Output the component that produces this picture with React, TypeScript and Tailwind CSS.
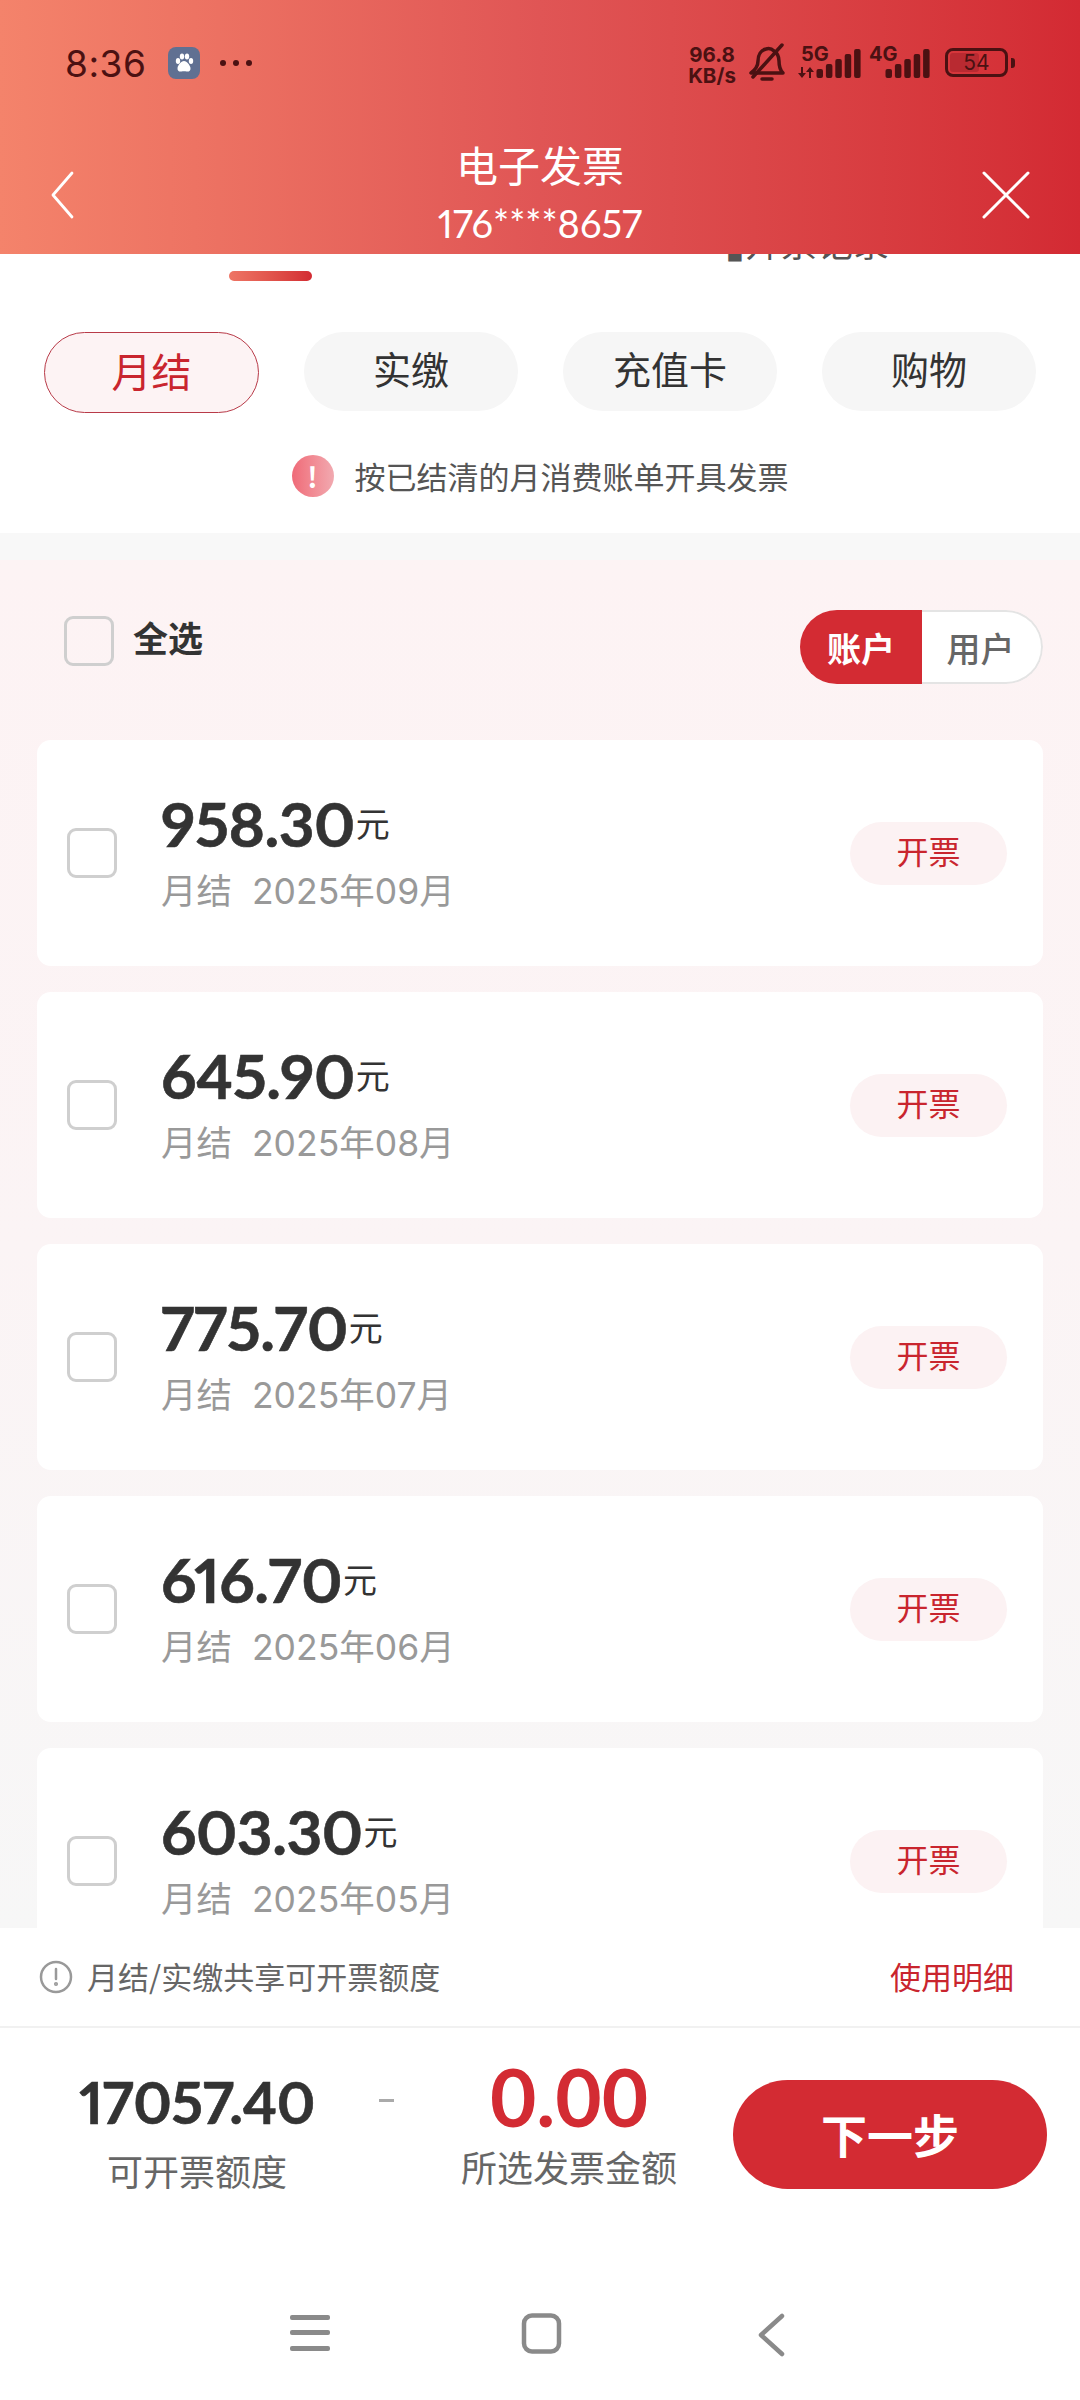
const cjk = "font-['Noto_Sans_CJK_SC','Noto_Sans',sans-serif]";
const bills = [
  { amount: "958.30", month: "2025年09月" },
  { amount: "645.90", month: "2025年08月" },
  { amount: "775.70", month: "2025年07月" },
  { amount: "616.70", month: "2025年06月" },
  { amount: "603.30", month: "2025年05月" },
];
const tabs = ["实缴", "充值卡", "购物"];

function Signal() {
  const hs = [9, 14, 19, 24, 29];
  return (
    <svg width="46" height="29" viewBox="0 0 46 29" className="block">
      {hs.map((h, i) => (
        <rect key={i} x={0.5 + i * 9.4} y={29 - h} width="6.500" height={h} rx="2" fill="#4b1112" />
      ))}
    </svg>
  );
}

function Check({ className }: { className: string }) {
  return <div className={`w-[50px] h-[50px] rounded-[9px] border-[3px] border-[#cfcfcf] shrink-0 ${className}`} />;
}

function StatusBar() {
  return (
    <div className="h-[128px] pt-[38px] pl-[65px] pr-[65px] flex items-start justify-between text-[#4b1112]">
      <div className="flex items-center h-[50px] gap-[23px]">
        <span className="font-['Inter',sans-serif] text-[37px] leading-none tracking-[0.5px] w-[80px]">8:36</span>
        <div className="w-[32px] h-[32px] rounded-[8px] bg-[#607092] flex items-center justify-center">
          <svg width="22" height="22" viewBox="0 0 22 22" fill="#fff">
            <ellipse cx="5" cy="9" rx="2.2" ry="3" />
            <ellipse cx="9" cy="4.5" rx="2.2" ry="3" />
            <ellipse cx="14" cy="4.5" rx="2.2" ry="3" />
            <ellipse cx="18" cy="9" rx="2.2" ry="3" />
            <path d="M11 9c-3 0-6 4-6.500 7-.3 3 2 4 4 3.500 1.500-.3 3.500-.3 5 0 2 .5 4.300-.5 4-3.500C17 13 14 9 11 9z" />
          </svg>
        </div>
        <svg width="34" height="8" viewBox="0 0 34 8" fill="#4b1112" className="-ml-[4px]">
          <circle cx="4" cy="4" r="3" />
          <circle cx="17" cy="4" r="3" />
          <circle cx="30" cy="4" r="3" />
        </svg>
      </div>
      <div className="flex items-start h-[50px] pt-[6px]">
        <div className="font-['Inter',sans-serif] font-bold text-[20.5px] leading-[21px] w-[50px] text-center">
          <div>96.8</div>
          <div className="whitespace-nowrap -mx-[2px]">KB/s</div>
        </div>
        <svg width="38" height="40" viewBox="0 0 38 40" fill="none" stroke="#4b1112" strokeWidth="3.500" strokeLinecap="round" strokeLinejoin="round" className="ml-[11px] -mt-[1px]">
          <path d="M3 30h32c-3-3-4-6-4-12 0-5-2-8-5-10-2-2-5-3-8-2-5 1-8 6-8 12 0 6-3 9-7 12z" />
          <path d="M14 36h10" />
          <path d="M5 34L34 2" />
        </svg>
        <div className="relative w-[64px] h-[40px] ml-[12px]">
          <span className="absolute left-[3px] top-0 font-['Inter',sans-serif] font-bold text-[20px] leading-none">5G</span>
          <div className="absolute left-[18px] top-[5px]">
            <Signal />
          </div>
          <svg width="17" height="11" viewBox="0 0 17 11" className="absolute left-0 top-[23px]" fill="#4b1112">
            <path d="M3 0h2v6h3L4 11 0 6h3zM11 11h2V5h3l-4-5-4 5h3z" />
          </svg>
        </div>
        <div className="relative w-[61px] h-[40px] ml-[7px]">
          <span className="absolute left-0 top-0 font-['Inter',sans-serif] font-bold text-[20px] leading-none">4G</span>
          <div className="absolute left-[16px] top-[5px]">
            <Signal />
          </div>
        </div>
        <div className="flex items-center gap-[3px] ml-[15px] mt-[4px]">
          <div className="w-[63px] h-[29px] rounded-[8px] border-[3px] border-[#4b1112] p-[2px] flex items-stretch relative">
            <div className="w-[54%] rounded-[3px] bg-[#b92a31]" />
            <span className="absolute inset-0 flex items-center justify-center font-['Inter',sans-serif] text-[21px] leading-none">54</span>
          </div>
          <div className="w-[4px] h-[10px] rounded-r-[3px] bg-[#4b1112]" />
        </div>
      </div>
    </div>
  );
}

function Footer() {
  return (
    <div className="bg-white shrink-0">
      <div className="h-[100px] flex items-center justify-between pl-[39px] pr-[66px] border-b-2 border-[#f1f1f1]">
        <div className="flex items-center gap-[14px]">
          <svg width="34" height="34" viewBox="0 0 34 34" fill="none" stroke="#999" strokeWidth="2.500">
            <circle cx="17" cy="17" r="15" />
            <path d="M17 9v10" strokeLinecap="round" />
            <circle cx="17" cy="24" r="0.8" />
          </svg>
          <span className="text-[31px] leading-none text-[#666] pb-[4px]">月结/实缴共享可开票额度</span>
        </div>
        <span className="text-[31px] leading-none text-[#c9252e] pb-[4px]">使用明细</span>
      </div>
      <div className="h-[164px] flex items-start">
        <div className="w-[394px] relative shrink-0">
          <div className="w-[302px] ml-[46px] text-center">
            <div className="font-['Lato',sans-serif] font-bold proportional-nums text-[58px] leading-[60px] mt-[44px] text-[#333] tracking-[-0.5px] [-webkit-text-stroke:0.6px_#333]">17057.40</div>
            <div className="text-[36px] leading-none mt-[20px] text-[#666]">可开票额度</div>
          </div>
          <div className="absolute left-[379px] top-[71px] w-[15px] h-[3px] bg-[#aaa]" />
        </div>
        <div className="w-[320px] text-center shrink-0 translate-x-[15px]">
          <div className="font-['Lato',sans-serif] font-bold text-[80px] leading-none mt-[28px] text-[#d32b33]">0.00</div>
          <div className="text-[36px] leading-none mt-[12px] text-[#666]">所选发票金额</div>
        </div>
        <div className="ml-[19px] mt-[52px] w-[314px] h-[109px] rounded-full bg-[#d32b33] text-white font-bold text-[46px] flex items-center justify-center pb-[3px]">
          下一步
        </div>
      </div>
      <div className="h-[208px] pt-[121px] flex justify-center">
        <div className="flex items-start -translate-x-[3px]">
          <svg width="42" height="42" viewBox="0 0 42 42" fill="#8a8a8a">
            <rect x="1" y="2" width="40" height="5" rx="2" />
            <rect x="1" y="17" width="40" height="5" rx="2" />
            <rect x="1" y="33" width="40" height="5" rx="2" />
          </svg>
          <svg width="42" height="42" viewBox="0 0 42 42" fill="none" stroke="#8a8a8a" strokeWidth="4.500" className="ml-[190px]">
            <rect x="3" y="2.500" width="35" height="36" rx="8" />
          </svg>
          <svg width="30" height="44" viewBox="0 0 30 44" fill="none" stroke="#8a8a8a" strokeWidth="4.500" strokeLinecap="round" strokeLinejoin="round" className="ml-[193px]">
            <path d="M26 3L5 22l21 19" />
          </svg>
        </div>
      </div>
    </div>
  );
}

export default function App() {
  return (
    <div className={`w-[1080px] h-[2400px] flex flex-col overflow-hidden bg-white text-[#333] ${cjk}`}>
      <div className="h-[254px] shrink-0 bg-gradient-to-r from-[#f4836b] via-[#e05555] to-[#d32a33]">
        <StatusBar />
        <div className="h-[134px] flex items-center justify-between pl-[49px] pr-[49px] text-white">
          <div className="w-[50px]">
            <svg width="26" height="50" viewBox="0 0 26 50" fill="none" stroke="#fff" strokeWidth="2.800" strokeLinecap="round" strokeLinejoin="round">
              <path d="M23 3L4 25l19 22" />
            </svg>
          </div>
          <div className="text-center mb-[3px]">
            <div className="text-[42px] leading-[52px]">电子发票</div>
            <div className="font-['Lato',sans-serif] proportional-nums text-[38px] leading-[52px] mt-[7px]">176****8657</div>
          </div>
          <svg width="50" height="50" viewBox="0 0 50 50" fill="none" stroke="#fff" strokeWidth="3" strokeLinecap="round">
            <path d="M3 3l44 44M47 3L3 47" />
          </svg>
        </div>
      </div>
      <div className="bg-white h-[279px] shrink-0">
        <div className="relative h-[27px] overflow-hidden">
          <div className="absolute left-[725px] -top-[33px] text-[36px] leading-[40px] text-[#555] whitespace-nowrap">▮开票记录</div>
          <div className="absolute left-[229px] top-[17px] w-[83px] h-[10px] rounded-full bg-gradient-to-r from-[#ee7565] to-[#d32b33]" />
        </div>
        <div className="flex justify-between pl-[44px] pr-[44px] mt-[51px]">
          <div className="w-[215px] h-[81px] rounded-full bg-[#fdf3f4] border border-[#b83a48] text-[#c9252e] text-[40px] flex items-center justify-center pb-[5px]">月结</div>
          {tabs.map((t) => (
            <div key={t} className="w-[214px] h-[79px] rounded-full bg-[#f6f6f6] text-[38px] text-[#333] flex items-center justify-center pb-[8px]">{t}</div>
          ))}
        </div>
        <div className="flex items-center justify-center mt-[42px] gap-[21px]">
          <div className="w-[42px] h-[42px] rounded-full bg-gradient-to-r from-[#ef6a78] to-[#f1a9b0] text-white font-bold text-[28px] leading-none flex items-center justify-center">!</div>
          <span className="text-[31px] leading-none text-[#555] mb-[2px]">按已结清的月消费账单开具发票</span>
        </div>
      </div>
      <div className="h-[27px] shrink-0 bg-[#f8f8f8]" />
      <div className="flex-1 min-h-0 overflow-hidden bg-gradient-to-b from-[#fdf3f4] via-[#fbf4f5] to-[#f7f7f7]">
        <div className="h-[180px] pl-[64px] pr-[37px] flex items-start justify-between">
          <div className="flex items-center gap-[19px] mt-[56px]">
            <Check className="bg-transparent" />
            <span className="text-[35px] font-bold leading-none text-[#333] -mt-[10px]">全选</span>
          </div>
          <div className="mt-[50px] flex h-[74px] rounded-full overflow-hidden">
            <div className="w-[122px] bg-[#d32b33] text-white font-bold text-[34px] flex items-center justify-center">账户</div>
            <div className="w-[121px] bg-white border-2 border-l-0 border-[#e4e4e4] rounded-r-full text-[#666] font-medium text-[34px] flex items-center justify-center pr-[2px]">用户</div>
          </div>
        </div>
        <div className="pl-[37px] pr-[37px] flex flex-col gap-[26px]">
          {bills.map((b) => (
            <div key={b.month} className="h-[226px] shrink-0 rounded-[14px] bg-white flex items-center pl-[30px] pr-[36px]">
              <Check className="bg-white" />
              <div className="ml-[44px] flex-1 mb-[6px]">
                <div className="flex items-center h-[72px]">
                  <span className="font-['Lato',sans-serif] font-bold proportional-nums text-[62px] leading-[72px] tracking-[-0.5px] text-[#333] [-webkit-text-stroke:0.6px_#333]">{b.amount}</span>
                  <span className="text-[34px] leading-none text-[#333] ml-[1px]">元</span>
                </div>
                <div className="text-[35.5px] leading-[44px] mt-[11px] text-[#999] whitespace-pre font-['Inter','Noto_Sans_CJK_SC',sans-serif]">{`月结  ${b.month}`}</div>
              </div>
              <div className="w-[157px] h-[63px] rounded-full bg-[#fcf2f3] text-[#c9252e] text-[32px] flex items-center justify-center pb-[6px]">开票</div>
            </div>
          ))}
        </div>
      </div>
      <Footer />
    </div>
  );
}
